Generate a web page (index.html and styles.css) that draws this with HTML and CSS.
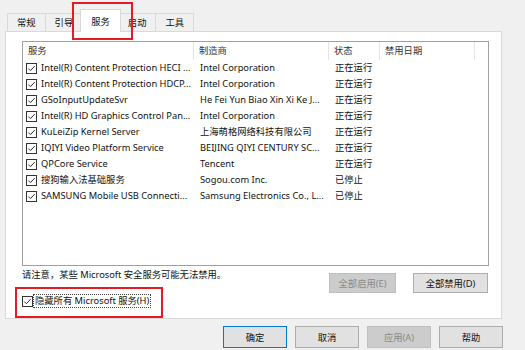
FILE: index.html
```html
<!DOCTYPE html>
<html lang="zh-CN">
<head>
    <meta charset="UTF-8">
    <title>系统配置 - 服务</title>
    <link rel="stylesheet" href="styles.css">
</head>
<body>
    <div class="dialog">
        <div class="tabs">
            <span class="tab">常规</span>
            <span class="tab">引导</span>
            <span class="tab active">服务</span>
            <span class="tab">启动</span>
            <span class="tab">工具</span>
        </div>

        <div class="panel">
            <div class="list">
                <div class="row head">
                    <span class="cell first">服务</span>
                    <span class="cell">制造商</span>
                    <span class="cell">状态</span>
                    <span class="cell">禁用日期</span>
                </div>
                <div class="row">
                    <span class="cell first"><svg class="cb" viewBox="0 0 11 11"><rect x="0.5" y="0.5" width="10" height="10"/><path d="M2.3 5.6l2.1 2.1 4.3-4.6"/></svg>Intel(R) Content Protection HECI ...</span>
                    <span class="cell">Intel Corporation</span>
                    <span class="cell">正在运行</span>
                    <span class="cell"></span>
                </div>
                <div class="row">
                    <span class="cell first"><svg class="cb" viewBox="0 0 11 11"><rect x="0.5" y="0.5" width="10" height="10"/><path d="M2.3 5.6l2.1 2.1 4.3-4.6"/></svg>Intel(R) Content Protection HDCP...</span>
                    <span class="cell">Intel Corporation</span>
                    <span class="cell">正在运行</span>
                    <span class="cell"></span>
                </div>
                <div class="row">
                    <span class="cell first"><svg class="cb" viewBox="0 0 11 11"><rect x="0.5" y="0.5" width="10" height="10"/><path d="M2.3 5.6l2.1 2.1 4.3-4.6"/></svg>GSoInputUpdateSvr</span>
                    <span class="cell">He Fei Yun Biao Xin Xi Ke J...</span>
                    <span class="cell">正在运行</span>
                    <span class="cell"></span>
                </div>
                <div class="row">
                    <span class="cell first"><svg class="cb" viewBox="0 0 11 11"><rect x="0.5" y="0.5" width="10" height="10"/><path d="M2.3 5.6l2.1 2.1 4.3-4.6"/></svg>Intel(R) HD Graphics Control Pan...</span>
                    <span class="cell">Intel Corporation</span>
                    <span class="cell">正在运行</span>
                    <span class="cell"></span>
                </div>
                <div class="row">
                    <span class="cell first"><svg class="cb" viewBox="0 0 11 11"><rect x="0.5" y="0.5" width="10" height="10"/><path d="M2.3 5.6l2.1 2.1 4.3-4.6"/></svg>KuLeiZip Kernel Server</span>
                    <span class="cell">上海萌格网络科技有限公司</span>
                    <span class="cell">正在运行</span>
                    <span class="cell"></span>
                </div>
                <div class="row">
                    <span class="cell first"><svg class="cb" viewBox="0 0 11 11"><rect x="0.5" y="0.5" width="10" height="10"/><path d="M2.3 5.6l2.1 2.1 4.3-4.6"/></svg>IQIYI Video Platform Service</span>
                    <span class="cell">BEIJING QIYI CENTURY SC...</span>
                    <span class="cell">正在运行</span>
                    <span class="cell"></span>
                </div>
                <div class="row">
                    <span class="cell first"><svg class="cb" viewBox="0 0 11 11"><rect x="0.5" y="0.5" width="10" height="10"/><path d="M2.3 5.6l2.1 2.1 4.3-4.6"/></svg>QPCore Service</span>
                    <span class="cell">Tencent</span>
                    <span class="cell">正在运行</span>
                    <span class="cell"></span>
                </div>
                <div class="row">
                    <span class="cell first"><svg class="cb" viewBox="0 0 11 11"><rect x="0.5" y="0.5" width="10" height="10"/><path d="M2.3 5.6l2.1 2.1 4.3-4.6"/></svg>搜狗输入法基础服务</span>
                    <span class="cell">Sogou.com Inc.</span>
                    <span class="cell">已停止</span>
                    <span class="cell"></span>
                </div>
                <div class="row">
                    <span class="cell first"><svg class="cb" viewBox="0 0 11 11"><rect x="0.5" y="0.5" width="10" height="10"/><path d="M2.3 5.6l2.1 2.1 4.3-4.6"/></svg>SAMSUNG Mobile USB Connecti...</span>
                    <span class="cell">Samsung Electronics Co., L...</span>
                    <span class="cell">已停止</span>
                    <span class="cell"></span>
                </div>
            </div>

            <div class="note-row">
                <span class="note">请注意，某些 Microsoft 安全服务可能无法禁用。</span>
                <div class="note-buttons">
                    <button class="btn btn-enable" disabled>全部启用(E)</button>
                    <button class="btn btn-disable">全部禁用(D)</button>
                </div>
            </div>

            <label class="hide-ms">
                <svg class="cb" viewBox="0 0 11 11"><rect x="0.5" y="0.5" width="10" height="10"/><path d="M2.3 5.6l2.1 2.1 4.3-4.6"/></svg>
                <span class="focus">隐藏所有 Microsoft 服务(H)</span>
            </label>
        </div>

        <div class="footer">
            <button class="btn btn-main default">确定</button>
            <button class="btn btn-main">取消</button>
            <button class="btn btn-main" disabled>应用(A)</button>
            <button class="btn btn-main">帮助</button>
        </div>

        <!-- 红框标注 -->
        <div class="mark mark-tab"></div>
        <div class="mark mark-check"></div>
    </div>
</body>
</html>
```

FILE: styles.css
```css
/* --- cores da janela --- */
:root {
    --fundo: #f0f0f0;
    --borda-aba: #d9d9d9;
    --borda-lista: #a0a0a0;
    --texto: #111;
    --botao: #e1e1e1;
    --borda-botao: #adadad;
    --botao-off: #cccccc;
    --texto-off: #8a8a8a;
    --azul: #0078d7;
    --vermelho: #e31b23;
}

body {
    margin: 0;
    background-color: var(--fundo);
    font-family: "Noto Sans", "Noto Sans CJK SC", sans-serif;
    font-size: 9.3px;
    color: var(--texto);
}

.dialog {
    position: relative;
    width: 525px;
    height: 350px;
    overflow: hidden;
}

/* abas */
.tabs {
    display: flex;
    align-items: flex-end;
    height: 21px;
    margin-top: 10px;
    padding-left: 8px;
}

.tab {
    display: flex;
    align-items: center;
    justify-content: center;
    height: 17px;
    padding: 0 9px;
    min-width: 18px;
    border: 1px solid var(--borda-aba);
    border-bottom: none;
    margin-left: -1px;
    background-color: var(--fundo);
    line-height: 17px;
}

.tab.active {
    padding: 0 10px;
    margin: 0 -2px -1px -3px;
    height: 22px;
    background-color: #fff;
    position: relative;
    z-index: 1;
}

/* painel branco */
.panel {
    width: 467px;
    height: 277px;
    margin: 0 22px 0 5px;
    padding: 9px 12px 0 16px;
    background-color: #fff;
    border: 1px solid var(--borda-aba);
}

.list {
    height: 223px;
    border: 1px solid var(--borda-lista);
}

.row {
    display: grid;
    grid-template-columns: 171px 135px 51px 95px;
    height: 16px;
    line-height: 16px;
}

.row.head {
    height: 18px;
    line-height: 18px;
    color: #333;
}

.cell {
    display: flex;
    align-items: center;
    padding-left: 6px;
    white-space: nowrap;
    overflow: hidden;
}

.cell.first {
    padding-left: 3px;
}

.head .cell {
    padding-left: 5px;
    border-right: 1px solid #e5e5e5;
}

.cb {
    flex: none;
    width: 11px;
    height: 11px;
    margin-right: 4px;
}

.cb rect {
    fill: #fff;
    stroke: #333;
}

.cb path {
    fill: none;
    stroke: #333;
    stroke-width: 1;
}

/* aviso e botões */
.note-row {
    display: flex;
    justify-content: space-between;
    margin-top: 2px;
}

.note {
    line-height: 14px;
}

.note-buttons {
    display: flex;
    gap: 17px;
    margin-top: 5px;
    padding-right: 1px;
}

.btn {
    font-family: inherit;
    font-size: 9.3px;
    color: var(--texto);
    height: 20px;
    padding: 0;
    background-color: var(--botao);
    border: 1px solid var(--borda-botao);
}

.btn:disabled {
    background-color: var(--botao-off);
    border-color: #bfbfbf;
    color: var(--texto-off);
}

.btn-enable {
    width: 67px;
}

.btn-disable {
    width: 75px;
}

.hide-ms {
    display: flex;
    align-items: center;
    margin-top: 1px;
    height: 14px;
}

.hide-ms .cb {
    margin-right: 0;
}

.focus {
    line-height: 12px;
    padding: 0 1px;
    border: 1px dotted #444;
}

/* rodapé */
.footer {
    display: flex;
    justify-content: flex-end;
    gap: 8px;
    padding: 7px 22px 0 0;
}

.btn-main {
    width: 64px;
    height: 22px;
}

.btn-main.default {
    border-color: var(--azul);
}

/* marcações vermelhas */
.mark {
    position: absolute;
    border: 2px solid var(--vermelho);
    pointer-events: none;
}

.mark-tab {
    left: 72px;
    top: 2px;
    width: 57px;
    height: 34px;
}

.mark-check {
    left: 15px;
    top: 287px;
    width: 144px;
    height: 27px;
}
```
